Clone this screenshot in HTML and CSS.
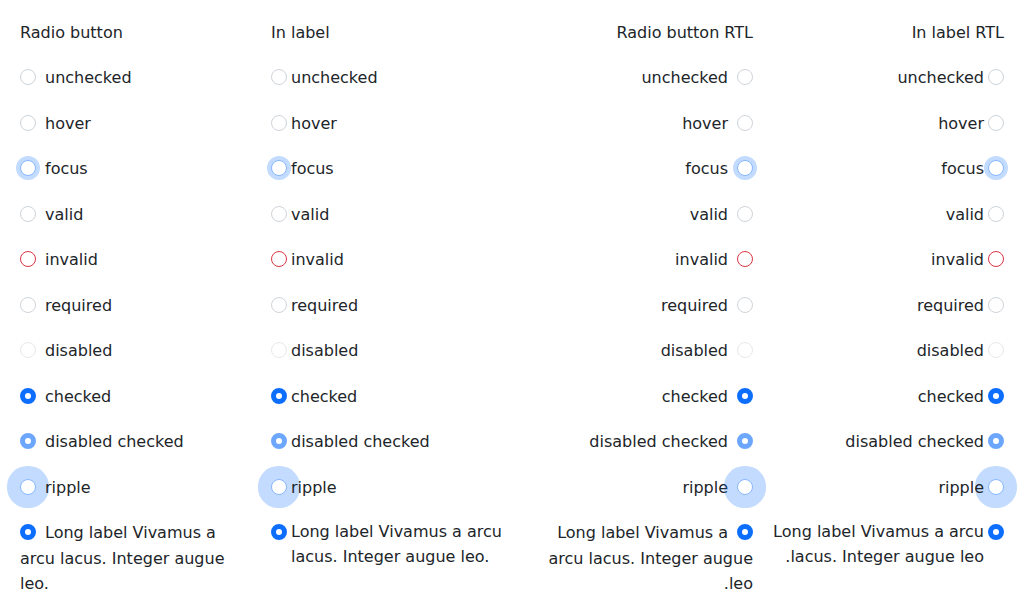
FILE: index.html
```html
<!DOCTYPE html>
<html>
<head>
<meta charset="utf-8">
<link rel="stylesheet" href="styles.css">
</head>
<body>
<div class="page">
  <div class="col">
    <div class="title">Radio button</div>
    <div class="row"><span class="radio"></span>unchecked</div>
    <div class="row"><span class="radio"></span>hover</div>
    <div class="row"><span class="radio focus"></span>focus</div>
    <div class="row"><span class="radio valid"></span>valid</div>
    <div class="row"><span class="radio invalid"></span>invalid</div>
    <div class="row"><span class="radio"></span>required</div>
    <div class="row"><span class="radio disabled"></span>disabled</div>
    <div class="row"><span class="radio checked"></span>checked</div>
    <div class="row"><span class="radio checked disabled"></span>disabled checked</div>
    <div class="row"><span class="radio ripple"></span>ripple</div>
    <div class="row"><span class="radio checked"></span>Long label Vivamus a arcu lacus. Integer augue leo.</div>
  </div>
  <div class="col">
    <div class="title">In label</div>
    <label class="lrow"><span class="radio"></span><span>unchecked</span></label>
    <label class="lrow"><span class="radio"></span><span>hover</span></label>
    <label class="lrow"><span class="radio focus"></span><span>focus</span></label>
    <label class="lrow"><span class="radio valid"></span><span>valid</span></label>
    <label class="lrow"><span class="radio invalid"></span><span>invalid</span></label>
    <label class="lrow"><span class="radio"></span><span>required</span></label>
    <label class="lrow"><span class="radio disabled"></span><span>disabled</span></label>
    <label class="lrow"><span class="radio checked"></span><span>checked</span></label>
    <label class="lrow"><span class="radio checked disabled"></span><span>disabled checked</span></label>
    <label class="lrow"><span class="radio ripple"></span><span>ripple</span></label>
    <label class="lrow long"><span class="radio checked"></span><span>Long label Vivamus a arcu lacus. Integer augue leo.</span></label>
  </div>
  <div class="col rtl" dir="rtl">
    <div class="title">Radio button RTL</div>
    <div class="row"><span class="radio"></span>unchecked</div>
    <div class="row"><span class="radio"></span>hover</div>
    <div class="row"><span class="radio focus"></span>focus</div>
    <div class="row"><span class="radio valid"></span>valid</div>
    <div class="row"><span class="radio invalid"></span>invalid</div>
    <div class="row"><span class="radio"></span>required</div>
    <div class="row"><span class="radio disabled"></span>disabled</div>
    <div class="row"><span class="radio checked"></span>checked</div>
    <div class="row"><span class="radio checked disabled"></span>disabled checked</div>
    <div class="row"><span class="radio ripple"></span>ripple</div>
    <div class="row"><span class="radio checked"></span>Long label Vivamus a arcu lacus. Integer augue leo.</div>
  </div>
  <div class="col rtl" dir="rtl">
    <div class="title">In label RTL</div>
    <label class="lrow"><span class="radio"></span><span>unchecked</span></label>
    <label class="lrow"><span class="radio"></span><span>hover</span></label>
    <label class="lrow"><span class="radio focus"></span><span>focus</span></label>
    <label class="lrow"><span class="radio valid"></span><span>valid</span></label>
    <label class="lrow"><span class="radio invalid"></span><span>invalid</span></label>
    <label class="lrow"><span class="radio"></span><span>required</span></label>
    <label class="lrow"><span class="radio disabled"></span><span>disabled</span></label>
    <label class="lrow"><span class="radio checked"></span><span>checked</span></label>
    <label class="lrow"><span class="radio checked disabled"></span><span>disabled checked</span></label>
    <label class="lrow"><span class="radio ripple"></span><span>ripple</span></label>
    <label class="lrow long"><span class="radio checked"></span><span>Long label Vivamus a arcu lacus. Integer augue leo.</span></label>
  </div>
</div>
</body>
</html>
```
FILE: styles.css
```css
html, body {
  margin: 0;
  padding: 0;
  background: #ffffff;
}
body {
  font-family: "DejaVu Sans", sans-serif;
  font-size: 16px;
  line-height: 25.5px;
  color: #212529;
}
.page {
  display: grid;
  grid-template-columns: repeat(4, 231px);
  column-gap: 20px;
  padding: 19.5px 20px 0 20px;
}
.col {
  display: flex;
  flex-direction: column;
  gap: 20px;
  min-width: 0;
}
.rtl {
  direction: rtl;
  text-align: right;
}
.title, .row {
  display: block;
}
.lrow {
  display: flex;
  align-items: flex-start;
  gap: 4px;
}
.lrow.long {
  line-height: 25px;
  margin-top: -1px;
}
.radio {
  display: inline-block;
  box-sizing: border-box;
  width: 16px;
  height: 16px;
  border-radius: 50%;
  border: 1px solid #ced4da;
  background: #ffffff;
  vertical-align: middle;
  margin-top: -3px;
  margin-inline-end: 9px;
  flex: none;
}
.lrow .radio {
  margin: 4px 0 0 0;
}
.lrow.long .radio {
  margin-top: 5px;
}
.radio.focus {
  border-color: #86b7fe;
  box-shadow: 0 0 0 4px rgba(13, 110, 253, 0.25);
}
.radio.invalid {
  border-color: #dc3545;
}
.radio.disabled {
  opacity: 0.5;
}
.radio.checked {
  border: 5px solid #0d6efd;
  background: #ffffff;
}
.radio.checked.disabled {
  opacity: 0.6;
}
.radio.ripple {
  border-color: #86b7fe;
  box-shadow: 0 0 0 13px rgba(13, 110, 253, 0.25);
}
```
